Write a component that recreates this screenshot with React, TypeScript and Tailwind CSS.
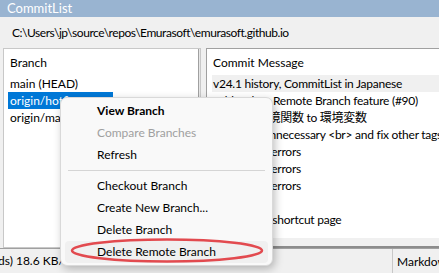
const font = { fontFamily: 'Lato, "Noto Sans CJK JP", sans-serif' }

const commits = [
  'v24.1 history, CommitList in Japanese',
  'Add Delete Remote Branch feature (#90)',
  'Rename 環境関数 to 環境変数',
  'Removed unnecessary <br> and fix other tags',
  'Fix spelling errors',
  'Fix spelling errors',
  'Fix spelling errors',
  'Update',
  'Update the shortcut page',
]

const menu: { label: string; bold?: boolean; disabled?: boolean; sep?: boolean; hover?: boolean }[] = [
  { label: 'View Branch', bold: true },
  { label: 'Compare Branches', disabled: true },
  { label: 'Refresh' },
  { label: '', sep: true },
  { label: 'Checkout Branch' },
  { label: 'Create New Branch...' },
  { label: 'Delete Branch' },
  { label: 'Delete Remote Branch', hover: true },
]

export default function App() {
  return (
    <div
      className="relative flex h-[273px] w-[439px] flex-col overflow-hidden bg-[#f0f0f0] text-[12px] text-black"
      style={font}
    >
      {/* title bar */}
      <div className="flex h-[17px] items-center bg-[#99b4d1] pl-[7px] text-[13px] leading-none text-white">
        CommitList
      </div>

      {/* repo path */}
      <div className="flex h-[31px] items-center pl-[12px] tracking-[-0.45px]">
        C:\Users\jp\source\repos\Emurasoft\emurasoft.github.io
      </div>

      {/* panels */}
      <div className="flex h-[200px] gap-[5px] pl-[3px]">
        <div className="flex w-[198px] shrink-0 border border-[#c8c8c8] bg-white">
          <div className="flex-1 pl-[6px] pt-[5px]">
            <div className="h-[21px] leading-[17px]">Branch</div>
            <div className="h-[17px] leading-[17px]">main (HEAD)</div>
            <div className="-ml-[2px] h-[17px] w-[105px] bg-[#0078d7] pl-[2px] leading-[17px] text-white">
              origin/hotfix
            </div>
            <div className="h-[17px] leading-[17px]">origin/main</div>
          </div>
          <div className="w-[2px] border-l border-[#a0a0a0] bg-[#e6e6e6]" />
        </div>

        <div className="flex min-w-0 flex-1 flex-col">
          <div className="flex flex-1 flex-col overflow-hidden border-l border-t border-[#a0a0a0] bg-white">
            <div className="h-[26px] pl-[6px] pt-[5px] leading-[17px]">Commit Message</div>
            {commits.map((c, i) => (
              <div
                key={i}
                className={
                  i === 0
                    ? 'ml-[5px] h-[17px] whitespace-nowrap bg-[#f0f0f0] pl-[1px] leading-[17px] tracking-[-0.25px]'
                    : 'ml-[5px] h-[17px] whitespace-nowrap pl-[1px] leading-[17px] tracking-[-0.25px]'
                }
              >
                {c}
              </div>
            ))}
          </div>
          <div className="h-[8px] bg-[#f0f0f0]" />
          <div className="h-[2px] bg-[#8c8c8c]" />
        </div>
      </div>

      {/* status bar */}
      <div className="flex flex-1 items-center overflow-hidden border-t border-[#a0a0a0]">
        <div className="-ml-[2px] w-[394px] shrink-0 whitespace-nowrap">ds) 18.6 KB/s</div>
        <div className="h-full border-l border-[#c8c8c8] pl-[4px] pt-[4px]">Markdown</div>
      </div>

      {/* context menu */}
      <div className="absolute left-[60px] top-[97px] w-[213px] rounded-[7px] border border-[#d9d9d9] bg-[#f9f9f9] px-[4px] py-[2px] shadow-[2px_3px_8px_rgba(0,0,0,0.25)]">
        {menu.map((m, i) =>
          m.sep ? (
            <div key={i} className="mx-[3px] my-[4px] h-px bg-[#d5d5d5]" />
          ) : (
            <div
              key={i}
              className={
                'flex h-[22px] items-center rounded-[4px] pl-[32px] ' +
                (m.hover ? 'bg-[#f0f0f0] ' : '') +
                (m.bold ? 'font-bold ' : '') +
                (m.disabled ? 'text-[#a0a0a0]' : 'text-black')
              }
            >
              {m.label}
            </div>
          ),
        )}
      </div>

      {/* annotation */}
      <svg className="absolute left-[68px] top-[237px]" width="198" height="28" viewBox="0 0 198 28">
        <ellipse cx="99" cy="13.5" rx="95" ry="11" fill="none" stroke="#e24a4f" strokeWidth="2.5" />
      </svg>
    </div>
  )
}
